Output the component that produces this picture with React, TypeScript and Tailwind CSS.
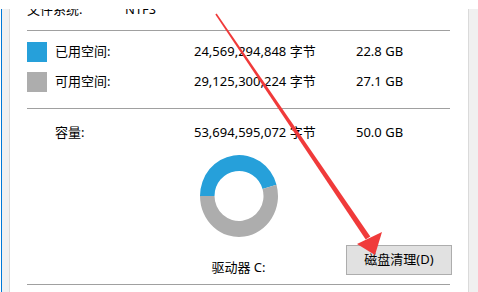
import React from "react";

const font = { fontFamily: "'Noto Sans', 'Noto Sans CJK SC', sans-serif" };

function Donut() {
  // 已用 45.6% 蓝色，从左侧顺时针经过顶部
  return (
    <svg width="80" height="84" viewBox="0 0 80 84" className="block mx-auto">
      <path
        d="M 1 42 A 39 41 0 0 1 77.49 30.7 L 63.55 35.11 A 24.5 25 0 0 0 15.5 42 Z"
        fill="#26a0da"
      />
      <path
        d="M 77.49 30.7 A 39 41 0 1 1 1 42 L 15.5 42 A 24.5 25 0 1 0 63.55 35.11 Z"
        fill="#adadad"
      />
    </svg>
  );
}

function SpaceRow({ color, label, bytes, size }: { color?: string; label: string; bytes: string; size: string }) {
  return (
    <div className="flex h-[20px] items-center text-[13px] text-black">
      {color ? <div className={`w-[20px] h-[20px] mr-[8px] ${color}`} /> : <div className="w-[28px]" />}
      <div className="w-[139px]">{label}</div>
      <div className="w-[162px]">{bytes}</div>
      <div>{size}</div>
    </div>
  );
}

export default function App() {
  return (
    <div className="relative w-[478px] h-[292px] bg-white overflow-hidden" style={font}>
      <div className="h-[9px] bg-white relative z-10" />
      <div className="flex h-[283px]">
        <div className="w-[1px] bg-white" />
        <div className="w-[1px] bg-[#0078d7]" />
        <div className="w-[7px] bg-[#f0f0f0]" />
        <div className="w-[1px] bg-[#dadada]" />

        <div className="w-[458px] bg-white overflow-visible pl-[17px] pr-[18px]">
          <div className="-mt-[9px] flex h-[20px] items-center text-[13px] text-black">
            <div className="w-[98px]">文件系统:</div>
            <div>NTFS</div>
          </div>
          <div className="mt-[10px] h-px bg-[#a0a0a0]" />

          <div className="mt-[11px]">
            <SpaceRow color="bg-[#26a0da]" label="已用空间:" bytes="24,569,294,848 字节" size="22.8 GB" />
          </div>
          <div className="mt-[10px]">
            <SpaceRow color="bg-[#adadad]" label="可用空间:" bytes="29,125,300,224 字节" size="27.1 GB" />
          </div>

          <div className="mt-[16px] h-px bg-[#a0a0a0]" />

          <div className="mt-[14px]">
            <SpaceRow label="容量:" bytes="53,694,595,072 字节" size="50.0 GB" />
          </div>

          <div className="mt-[11px]">
            <Donut />
          </div>

          <div className="mt-[7px] grid grid-cols-[1fr_auto_1fr] h-[33px] items-start">
            <div />
            <div className="mt-[13px] h-[20px] flex items-center text-[13px] text-black">驱动器 C:</div>
            <div className="justify-self-end -mr-[2px]">
              <button
                type="button"
                className="w-[106px] h-[30px] bg-[#e1e1e1] border border-[#adadad] text-[13px] text-black"
              >
                磁盘清理(D)
              </button>
            </div>
          </div>

          <div className="mt-[6px] h-px bg-[#a0a0a0]" />
        </div>

        <div className="w-[1px] bg-[#dadada]" />
        <div className="flex-1 bg-[#f0f0f0]" />
      </div>

      {/* 红色箭头标注：线条由细变粗 */}
      <svg className="absolute left-0 top-0 z-20 pointer-events-none" width="478" height="292">
        <polygon points="215.34,14.45 216.66,13.55 370.3,236.4 365.7,239.6" fill="#f03a3a" />
        <polygon points="357,244 382,232 375,255" fill="#f03a3a" />
      </svg>
    </div>
  );
}
